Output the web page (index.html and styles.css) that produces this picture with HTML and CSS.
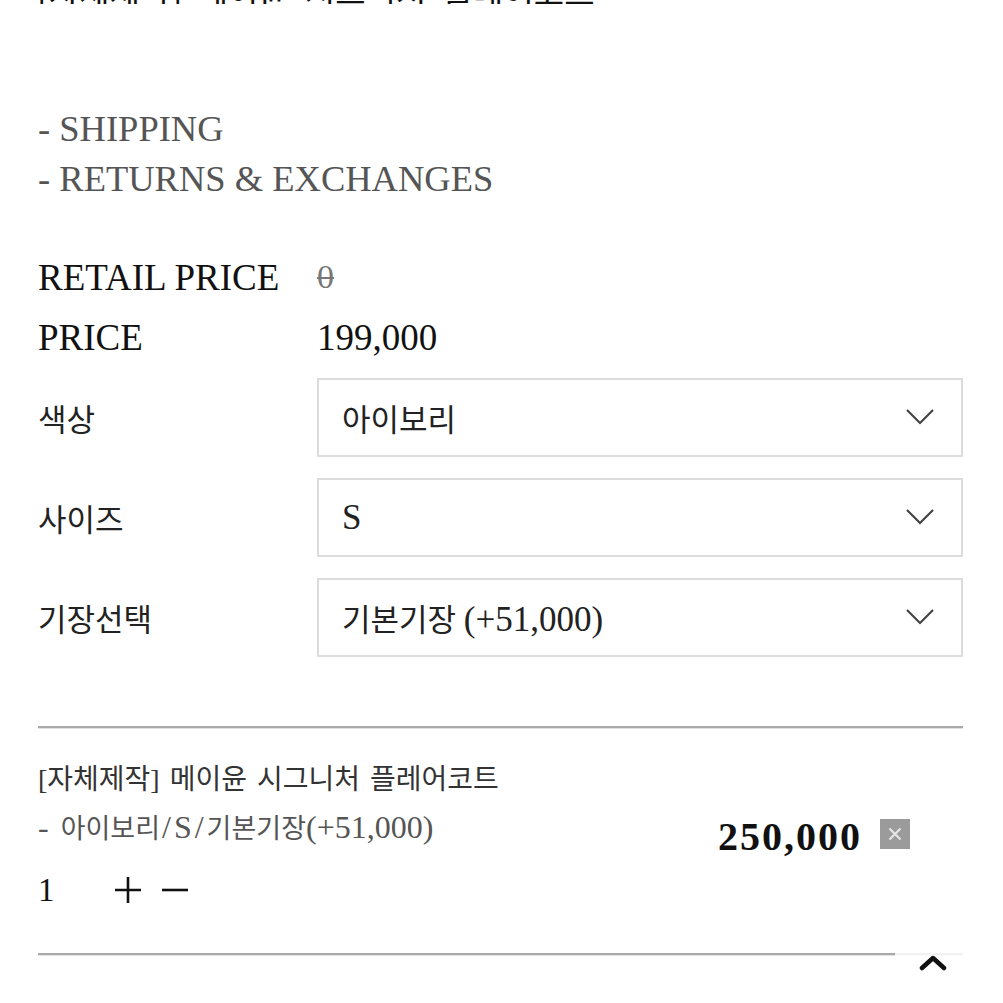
FILE: index.html
```html
<!DOCTYPE html>
<html lang="ko">
<head>
<meta charset="utf-8">
<title>상품 옵션</title>
<link rel="stylesheet" href="styles.css">
</head>
<body>
<div class="page">
  <div class="top-cut"><div class="top-cut-text">[자체제작] 메이윤 시그니처 플레어코트</div></div>

  <ul class="info-links">
    <li>- SHIPPING</li>
    <li>- RETURNS &amp; EXCHANGES</li>
  </ul>

  <div class="price-table">
    <div class="price-row">
      <div class="price-label">RETAIL PRICE</div>
      <div class="price-retail">0</div>
    </div>
    <div class="price-row">
      <div class="price-label">PRICE</div>
      <div class="price-value">199,000</div>
    </div>
  </div>

  <div class="options">
    <div class="opt-row">
      <div class="opt-label">색상</div>
      <div class="opt-select">
        <span class="opt-text">아이보리</span>
        <svg class="chev" width="30" height="18" viewBox="0 0 30 18"><polyline points="2,2 15,15 28,2" fill="none" stroke="#444" stroke-width="2.2"/></svg>
      </div>
    </div>
    <div class="opt-row">
      <div class="opt-label">사이즈</div>
      <div class="opt-select">
        <span class="opt-text"><span class="lat">S</span></span>
        <svg class="chev" width="30" height="18" viewBox="0 0 30 18"><polyline points="2,2 15,15 28,2" fill="none" stroke="#444" stroke-width="2.2"/></svg>
      </div>
    </div>
    <div class="opt-row">
      <div class="opt-label">기장선택</div>
      <div class="opt-select">
        <span class="opt-text">기본기장 <span class="lat">(+51,000)</span></span>
        <svg class="chev" width="30" height="18" viewBox="0 0 30 18"><polyline points="2,2 15,15 28,2" fill="none" stroke="#444" stroke-width="2.2"/></svg>
      </div>
    </div>
  </div>

  <div class="sep"></div>

  <div class="item">
    <div class="item-name">[자체제작] 메이윤 시그니처 플레어코트</div>
    <div class="item-mid">
      <div class="item-opt"><span class="lat dash">- </span>아이보리<span class="lat slash">/S/</span>기본기장<span class="lat">(+51,000)</span></div>
      <div class="item-price">
        <span class="item-total">250,000</span>
        <span class="del-btn"><svg width="30" height="30" viewBox="0 0 30 30"><path d="M9.5 9.5 L20.5 20.5 M20.5 9.5 L9.5 20.5" stroke="#e6e6e6" stroke-width="2.2" fill="none"/></svg></span>
      </div>
    </div>
    <div class="item-qty">
      <span class="qty-num">1</span>
      <svg class="qty-btn plus" width="26" height="26" viewBox="0 0 26 26"><path d="M0 13 H26 M13 0 V26" stroke="#111" stroke-width="2.6" fill="none"/></svg>
      <svg class="qty-btn minus" width="26" height="26" viewBox="0 0 26 26"><path d="M0 13 H26" stroke="#111" stroke-width="2.6" fill="none"/></svg>
    </div>
  </div>

  <div class="sep sep-bottom"></div>
</div>

<div class="to-top">
  <svg width="28" height="18" viewBox="0 0 28 18"><polyline points="3,14 14,4 25,14" fill="none" stroke="#111" stroke-width="4.5" stroke-linecap="round" stroke-linejoin="round"/></svg>
</div>
</body>
</html>
```

FILE: styles.css
```css
html, body {
  margin: 0;
  padding: 0;
  background: #fff;
}

body {
  font-family: "Liberation Serif", "Noto Sans CJK KR", serif;
  color: #111;
  overflow: hidden;
  height: 1003px;
}

.page {
  padding: 0 40px 0 38px;
}

.top-cut {
  height: 4px;
  overflow: hidden;
  display: flex;
  align-items: flex-end;
}

.top-cut-text {
  font-size: 33px;
  line-height: 40px;
  white-space: nowrap;
  color: #111;
  flex: none;
  margin-bottom: -10px;
  word-spacing: 8px;
}

.info-links {
  list-style: none;
  margin: 100px 0 0;
  padding: 0;
  font-size: 36.5px;
  line-height: 50px;
  color: #555;
}

.price-table {
  margin-top: 43px;
}

.price-row {
  display: flex;
  align-items: center;
  height: 60px;
  font-size: 37px;
}

.price-label {
  width: 279px;
  flex: none;
  color: #111;
}

.price-retail {
  color: #777;
  font-size: 34px;
  text-decoration: line-through;
  text-decoration-thickness: 2px;
}

.price-value {
  color: #111;
}

.options {
  margin-top: 11px;
  display: flex;
  flex-direction: column;
  gap: 21px;
}

.opt-row {
  display: flex;
  align-items: center;
  height: 79px;
}

.opt-label {
  width: 279px;
  flex: none;
  font-size: 31px;
  color: #222;
}

.opt-select {
  flex: 1;
  height: 79px;
  box-sizing: border-box;
  border: 2px solid #dcdcdc;
  display: flex;
  align-items: center;
  justify-content: space-between;
  padding: 0 26px 0 23px;
}

.opt-text {
  font-size: 31px;
  color: #222;
}

.opt-text .lat {
  font-size: 35px;
}

.chev {
  display: block;
  margin-top: -2px;
}

.sep {
  margin-top: 69px;
  height: 2px;
  background: #a9a9a9;
  border-bottom: 1px solid #e2e2e2;
}

.item {
  padding-top: 31px;
}

.item-name {
  font-size: 28px;
  line-height: 40px;
  color: #333;
  word-spacing: 3px;
}

.item-mid {
  display: flex;
  align-items: center;
  justify-content: space-between;
  height: 64px;
  padding-right: 53px;
}

.item-opt {
  font-size: 27px;
  color: #555;
  margin-top: -12px;
}

.item-opt .lat {
  font-size: 32px;
}

.item-opt .dash {
  word-spacing: 4px;
}

.item-opt .slash {
  letter-spacing: 3px;
  margin-left: 2px;
}

.item-price {
  display: flex;
  align-items: center;
  gap: 18px;
  margin-top: 8px;
}

.item-total {
  font-size: 40px;
  font-weight: bold;
  letter-spacing: 2px;
  color: #111;
}

.del-btn {
  width: 30px;
  height: 30px;
  background: #9b9b9b;
  display: block;
  margin-top: -4px;
}

.del-btn svg {
  display: block;
}

.item-qty {
  display: flex;
  align-items: center;
  height: 50px;
  margin-top: 1px;
}

.qty-num {
  font-size: 33px;
  width: 77px;
  color: #111;
}

.qty-btn {
  display: block;
}

.qty-btn.minus {
  margin-left: 21px;
}

.sep-bottom {
  margin-top: 38px;
}

.to-top {
  position: fixed;
  left: 895px;
  top: 945px;
  width: 68px;
  height: 58px;
  background: rgba(255, 255, 255, 0.85);
  display: flex;
  justify-content: flex-start;
  align-items: flex-start;
  padding: 9px 0 0 24px;
  box-sizing: border-box;
}

.to-top svg {
  display: block;
}
```
